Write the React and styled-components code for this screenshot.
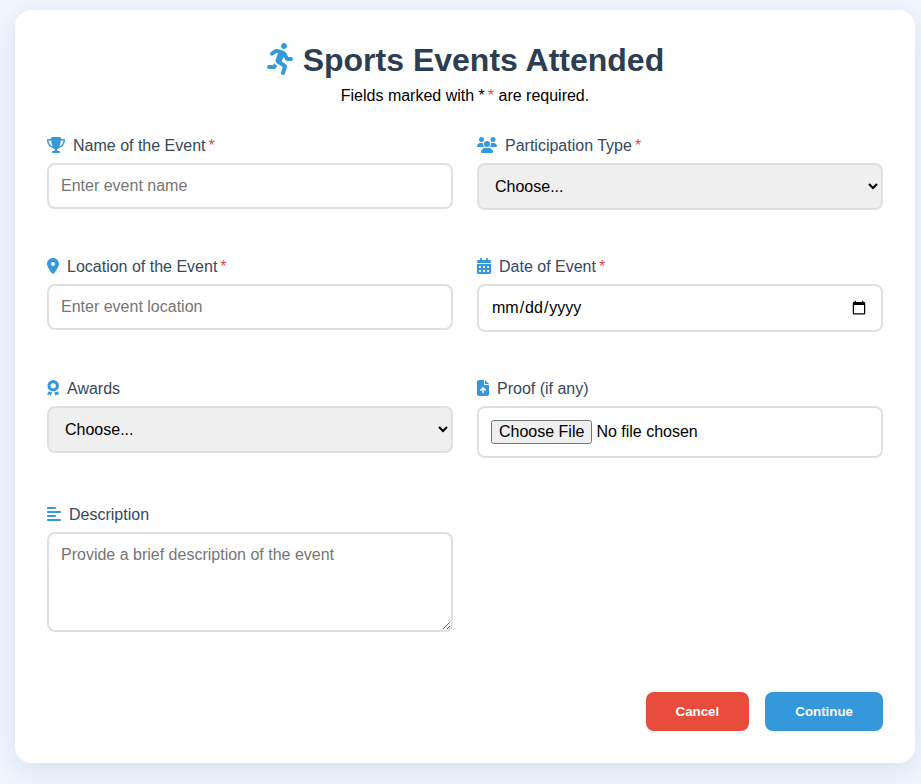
import React from 'react';
import styled, { createGlobalStyle } from 'styled-components';
import {
  FaTrophy,
  FaUsers,
  FaLocationDot,
  FaCalendarDays,
  FaFileArrowUp,
  FaAlignLeft,
} from 'react-icons/fa6';
import { FaRunning } from 'react-icons/fa';

const GlobalStyle = createGlobalStyle`
  * {
    box-sizing: border-box;
  }
  body {
    margin: 0;
    min-height: 100vh;
    background: #f0f7ff;
    font-family: "Liberation Sans", Arial, sans-serif;
  }
`;

const Page = styled.main`
  padding: 10px 6px 20px 15px;
`;

const Card = styled.form`
  max-width: 900px;
  margin: 0 auto;
  padding: 32px;
  background: #fff;
  border-radius: 16px;
  box-shadow: 0 8px 32px rgba(20, 25, 60, 0.11);
`;

const Title = styled.h1`
  margin: 0 0 8px;
  text-align: center;
  font-size: 32px;
  line-height: 37px;
  color: #2c3e50;

  svg {
    width: 28px;
    height: 32px;
    vertical-align: -4px;
    color: #3498db;
  }
`;

const Note = styled.p`
  margin: 0 0 32px;
  text-align: center;
  font-size: 16px;
  line-height: 18px;
  color: #000;
`;

const Required = styled.span`
  margin-left: 3px;
  color: #e74c3c;
`;

const Grid = styled.div`
  display: grid;
  grid-template-columns: repeat(2, minmax(0, 1fr));
  column-gap: 24px;
  row-gap: 48px;
`;

const FieldBox = styled.div`
  display: flex;
  flex-direction: column;
  gap: 8px;
`;

const Label = styled.label`
  font-size: 16px;
  line-height: 18px;
  color: #34495e;

  svg {
    width: ${({ $iconWidth }) => $iconWidth}px;
    height: 16px;
    margin-right: 8px;
    vertical-align: -2px;
    color: #3498db;
  }
`;

const controlStyle = `
  width: 100%;
  padding: 12px;
  border: 2px solid #e0e0e0;
  border-radius: 8px;
  font-family: inherit;
  font-size: 16px;
`;

const Input = styled.input`
  ${controlStyle}
`;

const Select = styled.select`
  ${controlStyle}
`;

const TextArea = styled.textarea`
  ${controlStyle}
  min-height: 100px;
  resize: vertical;
`;

const Actions = styled.div`
  display: flex;
  justify-content: flex-end;
  gap: 16px;
  margin-top: 60px;
`;

const Button = styled.button`
  padding: 12px 30px;
  border: 0;
  border-radius: 8px;
  background: ${({ $danger }) => ($danger ? '#e74c3c' : '#3498db')};
  color: #fff;
  font-family: inherit;
  font-weight: 700;
  cursor: pointer;
`;

function AwardIcon() {
  return (
    <svg viewBox="0 0 12 16" overflow="visible" aria-hidden="true">
      <circle cx="6.2" cy="5.8" r="4.2" fill="none" stroke="currentColor" strokeWidth="3.1" />
      <path
        fill="currentColor"
        d="M1.5 11.4 5.2 12.4 3.6 16 2.3 14.4 0 14.7ZM10.9 11.4 7.2 12.4 8.8 16 10.1 14.4 12.4 14.7Z"
      />
    </svg>
  );
}

function Field({ id, icon: Icon, iconWidth, label, required, children }) {
  return (
    <FieldBox>
      <Label htmlFor={id} $iconWidth={iconWidth}>
        <Icon />
        {label}
        {required && <Required>*</Required>}
      </Label>
      {children}
    </FieldBox>
  );
}

export default function App() {
  return (
    <>
      <GlobalStyle />
      <Page>
        <Card onSubmit={(event) => event.preventDefault()}>
          <Title>
            <FaRunning /> Sports Events Attended
          </Title>
          <Note>
            Fields marked with *<Required>*</Required> are required.
          </Note>
          <Grid>
            <Field id="name" icon={FaTrophy} iconWidth={18} label="Name of the Event" required>
              <Input id="name" type="text" placeholder="Enter event name" />
            </Field>
            <Field id="participation" icon={FaUsers} iconWidth={20} label="Participation Type" required>
              <Select id="participation">
                <option>Choose...</option>
                <option>Individual</option>
                <option>Team</option>
              </Select>
            </Field>
            <Field id="location" icon={FaLocationDot} iconWidth={12} label="Location of the Event" required>
              <Input id="location" type="text" placeholder="Enter event location" />
            </Field>
            <Field id="date" icon={FaCalendarDays} iconWidth={14} label="Date of Event" required>
              <Input id="date" type="date" />
            </Field>
            <Field id="awards" icon={AwardIcon} iconWidth={12} label="Awards">
              <Select id="awards">
                <option>Choose...</option>
                <option>Winner</option>
                <option>Runner-up</option>
              </Select>
            </Field>
            <Field id="proof" icon={FaFileArrowUp} iconWidth={12} label="Proof (if any)">
              <Input id="proof" type="file" />
            </Field>
            <Field id="description" icon={FaAlignLeft} iconWidth={14} label="Description">
              <TextArea id="description" placeholder="Provide a brief description of the event" />
            </Field>
          </Grid>
          <Actions>
            <Button type="button" $danger>Cancel</Button>
            <Button type="submit">Continue</Button>
          </Actions>
        </Card>
      </Page>
    </>
  );
}
